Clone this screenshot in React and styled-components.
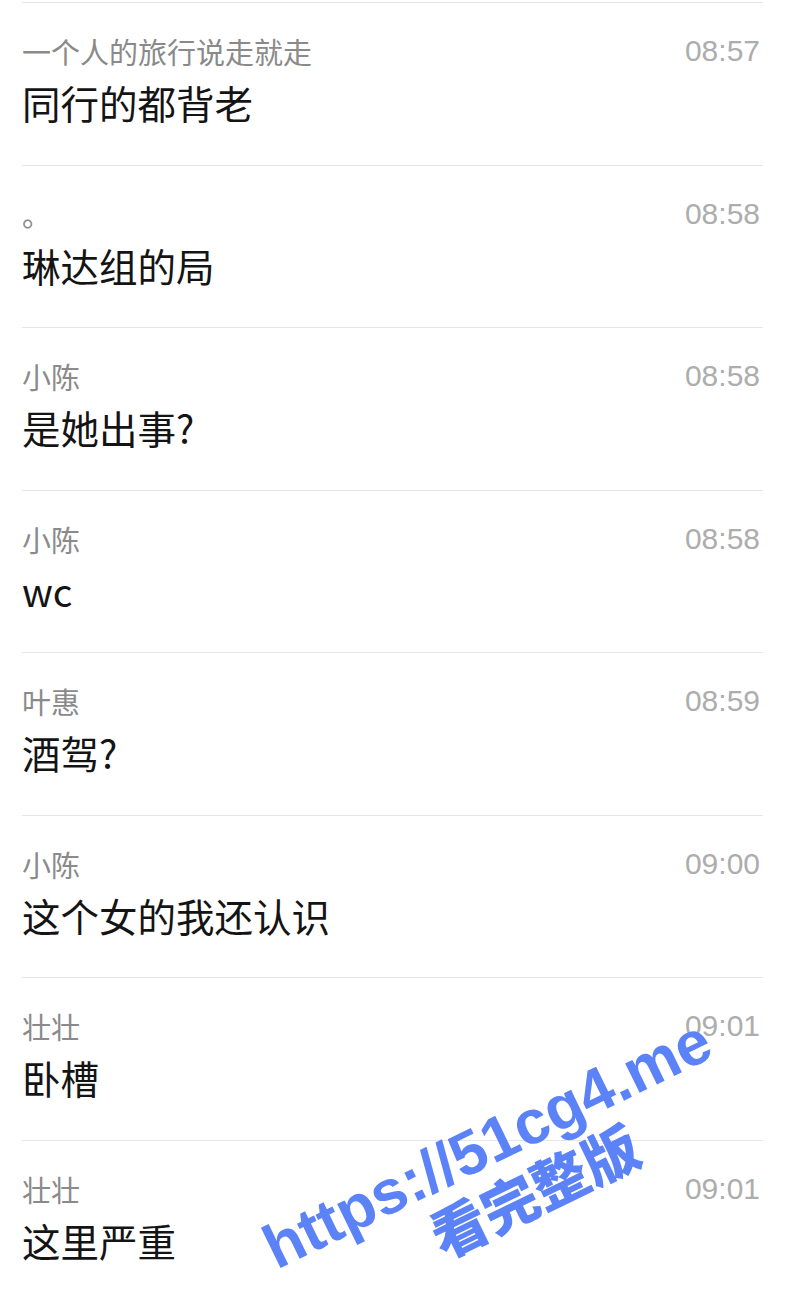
import React from 'react';
import styled, { createGlobalStyle } from 'styled-components';

const GlobalStyle = createGlobalStyle`
  html, body {
    margin: 0;
    padding: 0;
    background: #ffffff;
  }
  body {
    font-family: "Noto Sans CJK SC", "Liberation Sans", sans-serif;
  }
`;

const Page = styled.div`
  position: relative;
  width: 800px;
  height: 1303px;
  overflow: hidden;
  background: #fff;
`;

const List = styled.ul`
  list-style: none;
  margin: 0 37px 0 22px;
  padding: 2px 0 0;
`;

const Row = styled.li`
  height: 162.5px;
  box-sizing: border-box;
  border-top: 1.5px solid #e6e6e6;
  padding: 30px 3px 0 0;
  display: flex;
  flex-direction: column;
`;

const Header = styled.div`
  display: flex;
  justify-content: space-between;
  align-items: center;
  height: 36px;
`;

const Name = styled.span`
  font-family: "Noto Sans CJK SC", sans-serif;
  font-size: 29px;
  color: #8a8a8a;
`;

const Time = styled.span`
  font-family: "Liberation Sans", "Noto Sans", sans-serif;
  font-size: 30px;
  color: #adadad;
`;

const Message = styled.div`
  margin-top: 10px;
  line-height: 46px;
  font-family: "Noto Sans CJK SC", "Liberation Sans", sans-serif;
  font-size: 38.5px;
  color: #141414;
`;

const Watermark = styled.div`
  position: absolute;
  left: 500px;
  top: 1170px;
  transform: translate(-50%, -50%) rotate(-26deg);
  display: flex;
  flex-direction: column;
  align-items: center;
  color: #5b82f6;
  font-family: "Liberation Sans", "Noto Sans CJK SC", sans-serif;
  font-weight: 900;
  white-space: nowrap;
  line-height: 1;
  pointer-events: none;
`;

const Url = styled.span`
  font-size: 62px;
`;

const Caption = styled.span`
  font-family: "Noto Sans CJK SC", sans-serif;
  font-size: 56px;
  font-weight: 900;
  margin: 2px 0 0 44px;
`;

const messages = [
  { name: '一个人的旅行说走就走', time: '08:57', text: '同行的都背老' },
  { name: '。', time: '08:58', text: '琳达组的局' },
  { name: '小陈', time: '08:58', text: '是她出事?' },
  { name: '小陈', time: '08:58', text: 'wc' },
  { name: '叶惠', time: '08:59', text: '酒驾?' },
  { name: '小陈', time: '09:00', text: '这个女的我还认识' },
  { name: '壮壮', time: '09:01', text: '卧槽' },
  { name: '壮壮', time: '09:01', text: '这里严重' },
];

const App = () => {
  return (
    <Page>
      <GlobalStyle />
      <List>
        {messages.map((m, i) => (
          <Row key={i}>
            <Header>
              <Name>{m.name}</Name>
              <Time>{m.time}</Time>
            </Header>
            <Message>{m.text}</Message>
          </Row>
        ))}
      </List>
      <Watermark>
        <Url>https://51cg4.me</Url>
        <Caption>看完整版</Caption>
      </Watermark>
    </Page>
  );
};

export default App;
